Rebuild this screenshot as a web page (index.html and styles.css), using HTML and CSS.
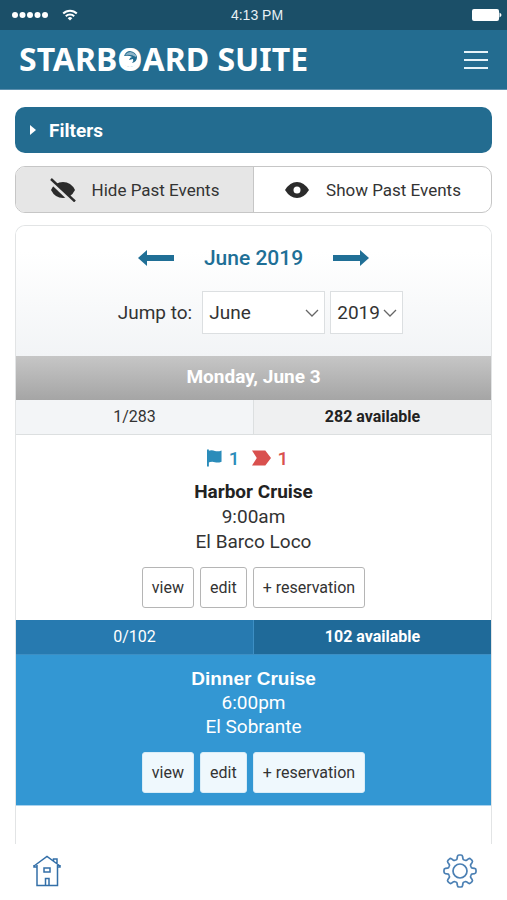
FILE: index.html
```html
<!DOCTYPE html>
<html lang="en">
<head>
<meta charset="utf-8">
<meta name="viewport" content="width=device-width, initial-scale=1">
<title>Starboard Suite</title>
<link rel="stylesheet" href="styles.css">
</head>
<body>
<div class="status">
  <div class="signal">
    <svg width="36" height="8" viewBox="0 0 36 8" fill="#fff"><circle cx="3" cy="4" r="3"/><circle cx="10.500" cy="4" r="3"/><circle cx="18" cy="4" r="3"/><circle cx="25.500" cy="4" r="3"/><circle cx="33" cy="4" r="3"/></svg>
    <svg width="16" height="12" viewBox="0 0 16 12" fill="none" stroke="#fff" stroke-width="2"><path d="M1.200 4.500a9.600 9.600 0 0 1 13.600 0M3.800 7.200a6 6 0 0 1 8.400 0"/><path d="M8 11.500 5.700 9.200a3.300 3.300 0 0 1 4.600 0z" fill="#fff" stroke="none"/></svg>
  </div>
  <span>4:13 PM</span>
  <svg class="battery" width="30" height="12" viewBox="0 0 30 12" fill="#fff"><rect width="27" height="12" rx="2"/><path d="M27.500 3.500q4 2.500 0 5z"/></svg>
</div>
<header class="header">
  <h1 class="logo">STARB<span class="logo-o">O<svg viewBox="0 0 24 24"><circle cx="12" cy="12" r="8" fill="#fff"/><path d="M6 9q2-5 6-5 6 1 7 6 0 5-5 6 2-2 1-4l-4 1q1-3 3-3-3-2-8-1z" fill="#236c90"/><path d="M7 8q5-6 11 0v2q-5-3-11-2z" fill="#8fb4c8"/></svg></span>ARD SUITE</h1>
  <button class="menu" aria-label="Menu"><svg width="24" height="20" viewBox="0 0 24 20" stroke="#e6f3f9" stroke-width="2"><path d="M0 2h24M0 10h24M0 18h24"/></svg></button>
</header>
<main class="main">
  <button class="filters"><svg width="6" height="10" viewBox="0 0 6 10" fill="#fff"><path d="M0 0l6 5-6 5z"/></svg>Filters</button>
  <div class="toggle">
    <button class="on"><svg width="26" height="24" viewBox="0 0 26 24"><path d="M1 12Q5 4 13 4t12 8q-4 8-12 8T1 12z" fill="#2b2b2b"/><path d="M0 2.500 23 24.500" stroke="#e6e6e6" stroke-width="4"/><path d="M1 1 25 23.500" stroke="#2b2b2b" stroke-width="2.400"/></svg>Hide Past Events</button>
    <button><svg width="26" height="24" viewBox="0 0 26 24"><path d="M1 12Q6 4 13 4t12 8q-5 8-12 8T1 12z" fill="#2b2b2b"/><circle cx="13" cy="12" r="3.500" fill="#fff"/></svg>Show Past Events</button>
  </div>
  <section class="card">
    <div class="calendar">
      <div class="month">
        <button aria-label="Previous month"><svg width="36" height="16" viewBox="0 0 36 16" fill="#206f96"><path d="M0 8 9 0v5h27v6H9v5z"/></svg></button>
        <h2>June 2019</h2>
        <button aria-label="Next month"><svg width="36" height="16" viewBox="0 0 36 16" fill="#206f96"><path d="M36 8 27 0v5H0v6h27v5z"/></svg></button>
      </div>
      <div class="jump">
        <label for="month">Jump to:</label>
        <span class="pick pick-month"><select id="month"><option>June</option></select><svg width="14" height="9" viewBox="0 0 14 9"><path d="M1 1l6 6 6-6"/></svg></span>
        <span class="pick pick-year"><select aria-label="Year"><option>2019</option></select><svg width="14" height="9" viewBox="0 0 14 9"><path d="M1 1l6 6 6-6"/></svg></span>
      </div>
    </div>
    <h3 class="day">Monday, June 3</h3>
    <article class="event">
      <div class="counts"><span>1/283</span><strong>282 available</strong></div>
      <div class="body">
        <div class="flags">
          <svg width="15" height="18" viewBox="0 0 16 18" fill="#2b8cba"><path d="M0 0h2v18H0z"/><path d="M1 1.500q4-1.500 7.500 0 3 1 7-.5v12q-4 1.500-7 .500-3.500-1-7.500.500z"/></svg><span class="blue">1</span>
          <svg class="tag" width="19" height="16" viewBox="0 0 20 16" fill="#d9504e"><path d="M0 0h14l6 8-6 8H0l5-8z"/></svg><span class="red">1</span>
        </div>
        <h4>Harbor Cruise</h4>
        <p>9:00am</p>
        <p>El Barco Loco</p>
        <div class="actions"><button>view</button><button>edit</button><button>+ reservation</button></div>
      </div>
    </article>
    <article class="event booked">
      <div class="counts"><span>0/102</span><strong>102 available</strong></div>
      <div class="body">
        <h4>Dinner Cruise</h4>
        <p>6:00pm</p>
        <p>El Sobrante</p>
        <div class="actions"><button>view</button><button>edit</button><button>+ reservation</button></div>
      </div>
    </article>
  </section>
</main>
<nav class="tabs">
  <a href="#home" aria-label="Home"><svg width="28" height="32" viewBox="0 0 28 32" fill="none" stroke="#336fa8" stroke-width="1.500"><path d="M4 10v20.500h20.500V10M1 11 14 1.500 27 11M1 10v2h3M27 10v2h-3M20.500 6V4h3.500v5M11 13h6v4h-6zM12.500 30v-6.500h3.500V30"/></svg></a>
  <a href="#settings" aria-label="Settings"><svg width="34" height="34" viewBox="-17 -17 34 34" fill="none" stroke="#4a7fb3" stroke-width="1.700"><defs><path id="tooth" d="M-4.670-11.270C-3.600-10.900-3-11.600-2.900-12.600L-2.600-14.500Q-2.300-16-1-16H1Q2.300-16 2.600-14.500L2.900-12.600C3-11.600 3.600-10.900 4.670-11.270"/></defs><circle r="7"/><use href="#tooth"/><use href="#tooth" transform="rotate(45)"/><use href="#tooth" transform="rotate(90)"/><use href="#tooth" transform="rotate(135)"/><use href="#tooth" transform="rotate(180)"/><use href="#tooth" transform="rotate(225)"/><use href="#tooth" transform="rotate(270)"/><use href="#tooth" transform="rotate(315)"/></svg></a>
</nav>
</body>
</html>
```
FILE: styles.css
```css
* { box-sizing: border-box; }
body {
  margin: 0;
  min-height: 100vh;
  display: flex;
  flex-direction: column;
  background: #fff;
  color: #333;
  font-family: Roboto, "Liberation Sans", sans-serif;
}
h1, h2, h3, h4, p { margin: 0; }
svg { display: block; flex: none; }
button, select { font: inherit; color: inherit; }
button { padding: 0; border: 0; background: none; }

.status {
  display: grid;
  grid-template-columns: 1fr auto 1fr;
  align-items: center;
  height: 30px;
  padding: 0 5px 0 12px;
  background: #1b4f68;
  color: #e8f1f5;
  font-family: "Liberation Sans", sans-serif;
  font-size: 14px;
}
.signal { display: flex; align-items: center; gap: 14px; }
.battery { justify-self: end; }
.header {
  display: flex;
  align-items: center;
  justify-content: space-between;
  height: 60px;
  padding: 0 19px;
  background: #236c90;
  border-bottom: 1px solid #5c8fae;
}
.logo {
  padding-bottom: 2px;
  color: #fff;
  font: 700 32px/56px "Noto Sans", "Open Sans", sans-serif;
}
.logo-o { position: relative; }
.logo-o svg { position: absolute; left: 1px; top: 10px; width: 24px; height: 24px; }

.main {
  flex: 1;
  display: flex;
  flex-direction: column;
  padding: 17px 15px 0;
}
.filters {
  display: flex;
  align-items: center;
  gap: 13px;
  height: 46px;
  padding: 0 15px;
  border-radius: 10px;
  background: #236c90;
  color: #fff;
  font-size: 19px;
  font-weight: 700;
}
.toggle {
  display: flex;
  height: 47px;
  margin: 13px 0 12px;
  border: 1px solid #c6c6c6;
  border-radius: 10px;
  overflow: hidden;
}
.toggle button {
  flex: 1;
  display: flex;
  align-items: center;
  justify-content: center;
  gap: 16px;
  padding-top: 1px;
  font-size: 17px;
}
.toggle .on { background: #e6e6e6; border-right: 1px solid #c6c6c6; }

.card {
  flex: 1;
  border: 1px solid #e2e4e5;
  border-bottom: 0;
  border-radius: 10px 10px 0 0;
  overflow: hidden;
}
.calendar {
  padding: 16px 0 22px;
  background: linear-gradient(#fff 20%, #f2f4f6);
}
.month {
  display: flex;
  align-items: center;
  justify-content: center;
  gap: 30px;
  height: 32px;
}
.month h2 { color: #206f96; font-size: 21px; font-weight: 500; }
.jump {
  display: flex;
  align-items: center;
  justify-content: center;
  gap: 5px;
  margin-top: 17px;
  padding-left: 14px;
  font-size: 19px;
}
.jump label { margin-right: 5px; }
.pick { position: relative; }
.pick select {
  width: 100%;
  height: 43px;
  padding: 0 6px;
  appearance: none;
  border: 1px solid #dcdfe1;
  border-radius: 0;
  background: #fff;
}
.pick-month { width: 123px; }
.pick-year { width: 73px; }
.pick svg {
  position: absolute;
  right: 6px;
  top: 18px;
  fill: none;
  stroke: #666;
  stroke-width: 1.3px;
  pointer-events: none;
}
.day {
  height: 44px;
  background: linear-gradient(#c6c6c6, #a5a5a5);
  color: #fff;
  font-size: 19px;
  font-weight: 700;
  line-height: 42px;
  text-align: center;
}
.counts {
  display: flex;
  height: 35px;
  border-bottom: 1px solid #dcdfe0;
  background: #f3f5f7;
  font-size: 16px;
  line-height: 33px;
  text-align: center;
}
.counts > * { flex: 1; }
.counts strong { background: #eff0f1; border-left: 1px solid #dcdfe0; color: #222; }
.body {
  display: flex;
  flex-direction: column;
  align-items: center;
  padding: 10px 0 12px;
  font-size: 19px;
  line-height: 25px;
}
.flags {
  display: flex;
  align-items: center;
  gap: 7px;
  height: 26px;
  margin-bottom: 8px;
  padding-right: 12px;
  font-weight: 500;
}
.flags .tag { margin-left: 5px; }
.blue { color: #2b8cba; }
.red { color: #d9504e; }
.body h4 { color: #222; font-size: 19px; font-weight: 700; }
.actions { display: flex; gap: 6px; margin-top: 13px; }
.actions button {
  height: 41px;
  padding: 0 9px;
  border: 1px solid #b5b5b5;
  border-radius: 3px;
  background: #fff;
  font-size: 16px;
}
.booked { background: #3397d3; color: #fff; border-bottom: 1px solid #a9d2ee; }
.booked .counts { background: #277ab0; border-color: #3d8fc4; }
.booked .counts strong { background: #1f6a99; border-color: #3d8fc4; color: #fff; }
.booked .body { padding: 12px 0; line-height: 24px; }
.booked h4 { color: #fff; font-family: "Liberation Sans", sans-serif; }
.booked button { border-color: #d9edf8; background: #eff8fd; color: #333; }

.tabs {
  display: flex;
  align-items: center;
  justify-content: space-between;
  height: 56px;
  padding: 0 30px 2px 33px;
  background: #fff;
}
```
